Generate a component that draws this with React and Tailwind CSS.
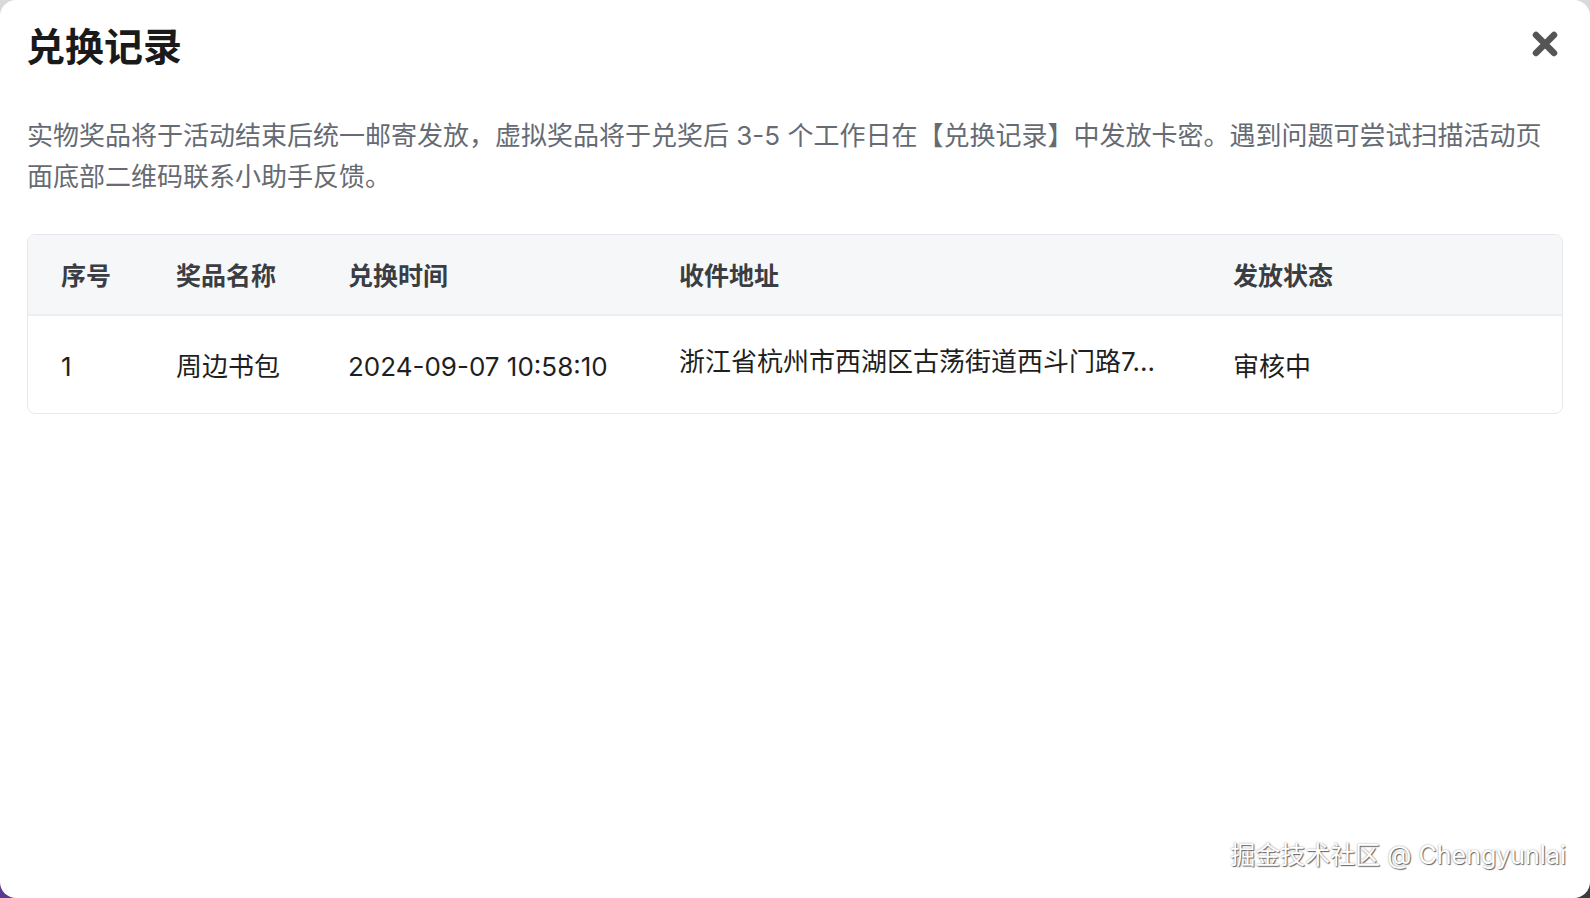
const columns = [
  { key: 'index', label: '序号', width: 'w-[115px]' },
  { key: 'name', label: '奖品名称', width: 'w-[172px]' },
  { key: 'time', label: '兑换时间', width: 'w-[331px]' },
  { key: 'address', label: '收件地址', width: 'w-[554px]' },
  { key: 'status', label: '发放状态', width: 'flex-1' },
]

const records = [
  {
    index: '1',
    name: '周边书包',
    time: '2024-09-07 10:58:10',
    address: '浙江省杭州市西湖区古荡街道西斗门路7...',
    status: '审核中',
  },
]

const CloseIcon = () => (
  <svg width="26" height="26" viewBox="0 0 26 26" className="block">
    <path d="M4 4 L22 22 M22 4 L4 22" stroke="#555555" strokeWidth="6.5" strokeLinecap="round" />
  </svg>
)

const App = () => {
  return (
    <div className="h-[898px] w-[1590px] overflow-hidden bg-[linear-gradient(to_bottom,#d9d9dc_50%,transparent_50%),linear-gradient(to_right,#5b3a92_50%,#3c3c3e_50%)] font-['Inter','Noto_Sans_CJK_SC',sans-serif]">
      <div className="relative h-full w-full rounded-[16px] bg-white">
        <div className="flex items-start justify-between pl-[26px] pr-[32px] pt-[19px]">
          <h1 className="text-[39px] font-bold leading-[56px] text-[#1a1a1a]">兑换记录</h1>
          <button className="mt-[12px]">
            <CloseIcon />
          </button>
        </div>

        <p className="mx-[27px] mt-[40px] text-[26px] leading-[41px] text-[#666b73]">
          实物奖品将于活动结束后统一邮寄发放，虚拟奖品将于兑奖后 3-5 个工作日在【兑换记录】中发放卡密。遇到问题可尝试扫描活动页面底部二维码联系小助手反馈。
        </p>

        <div className="mx-[27px] mt-[37px] overflow-hidden rounded-[8px] border border-[#e6e8eb]">
          <div className="flex h-[81px] items-center border-b-2 border-[#eceef1] bg-[#f6f7f9] pt-[4px]">
            {columns.map(col => (
              <div key={col.key} className={`${col.width} pl-[33px] text-[25px] font-semibold text-[#3a3d42]`}>
                {col.label}
              </div>
            ))}
          </div>
          {records.map(row => (
            <div key={row.index} className="flex h-[97px] items-center pt-[3px] text-[26px] text-[#1f1f1f]">
              <div className="w-[115px] pl-[33px]">{row.index}</div>
              <div className="w-[172px] pl-[33px]">{row.name}</div>
              <div className="w-[331px] pl-[33px]">{row.time}</div>
              <div className="mb-[10px] w-[554px] pl-[33px]">{row.address}</div>
              <div className="flex-1 pl-[33px]">{row.status}</div>
            </div>
          ))}
        </div>

        <div className="absolute bottom-[24px] right-[24px] text-[25px] text-white [text-shadow:1px_1px_1px_#666,0_0_2px_#999]">
          掘金技术社区 @ Chengyunlai
        </div>
      </div>
    </div>
  )
}

export default App
